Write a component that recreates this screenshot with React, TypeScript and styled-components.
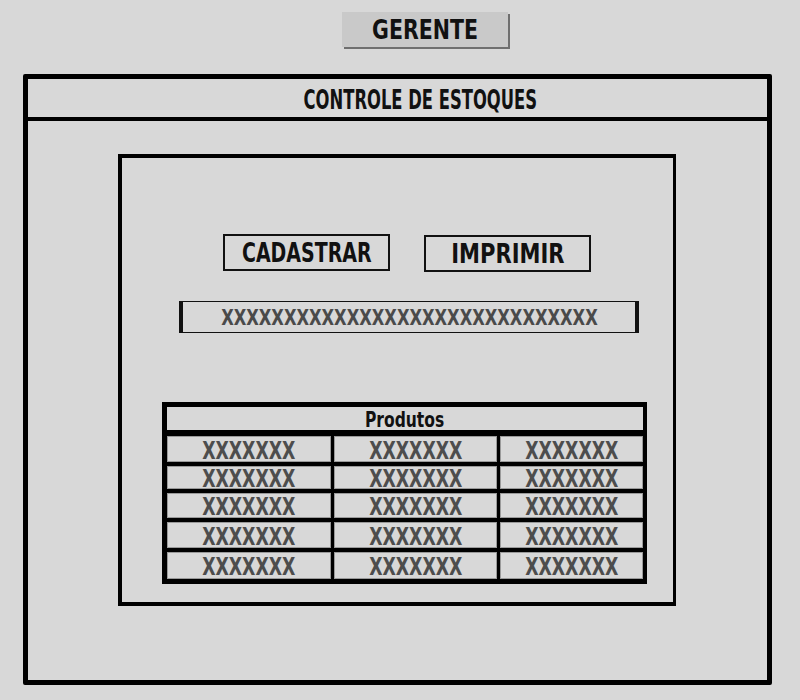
import styled, { createGlobalStyle } from 'styled-components';

const GlobalStyle = createGlobalStyle`
	html, body {
		margin: 0;
		padding: 0;
		background: #d8d8d8;
	}
	body {
		font-family: "DejaVu Sans", "Liberation Sans", sans-serif;
	}
`;

const Page = styled.div`
	width: 800px;
	height: 700px;
	padding-top: 12px;
	box-sizing: border-box;
	display: flex;
	flex-direction: column;
	background: #d8d8d8;
`;

// squeezed label, the mockup uses a narrow bold face
const Squeeze = styled.span<{ $scale: number }>`
	display: inline-block;
	white-space: nowrap;
	transform: scaleX(${(p) => p.$scale});
	transform-origin: center;
`;

const RoleTab = styled.div`
	margin-left: 342px;
	width: 166px;
	height: 35px;
	display: flex;
	align-items: center;
	justify-content: center;
	background: #c9c9c9;
	box-shadow: 2px 2px 0 #6f6f6f;
	font-size: 26px;
	font-weight: bold;
	color: #111;
`;

const Frame = styled.div`
	margin-top: 27px;
	margin-left: 23px;
	width: 749px;
	height: 611px;
	box-sizing: border-box;
	border: 5px solid #000;
	border-radius: 2px;
	display: flex;
	flex-direction: column;
`;

const Header = styled.div`
	height: 42px;
	box-sizing: border-box;
	border-bottom: 4px solid #000;
	border-right: 2px solid #000;
	margin-right: -2px;
	padding: 4px 0 0 46px;
	display: flex;
	align-items: center;
	justify-content: center;
	font-size: 26px;
	font-weight: bold;
	color: #111;
`;

const Body = styled.div`
	flex: 1;
	padding: 33px 0 0 90px;
`;

const Panel = styled.div`
	width: 558px;
	height: 452px;
	box-sizing: border-box;
	border: 4px solid #000;
	border-right-width: 3px;
	display: flex;
	flex-direction: column;
	padding-top: 76px;
`;

const ButtonRow = styled.div`
	display: flex;
	gap: 34px;
	padding-left: 101px;
`;

const ActionButton = styled.div<{ $offset?: number }>`
	width: 167px;
	height: 37px;
	box-sizing: border-box;
	border: 2px solid #111;
	margin-top: ${(p) => p.$offset ?? 0}px;
	display: flex;
	align-items: center;
	justify-content: center;
	font-size: 26px;
	font-weight: bold;
	color: #111;
`;

const SearchBar = styled.div`
	margin-top: 29px;
	margin-left: 57px;
	width: 460px;
	height: 32px;
	box-sizing: border-box;
	border: 1px solid #111;
	border-left-width: 4px;
	border-right-width: 4px;
	display: flex;
	align-items: center;
	justify-content: center;
	font-size: 22px;
	font-weight: bold;
	color: #4a4a4a;
`;

const Table = styled.div`
	margin-top: 69px;
	margin-left: 40px;
	width: 485px;
	box-sizing: border-box;
	background: #000;
	padding: 5px 4px 5px 5px;
	display: grid;
	grid-template-columns: 164px 163px 1fr;
	column-gap: 3px;
	row-gap: 4px;
`;

const TableTitle = styled.div`
	grid-column: 1 / -1;
	height: 21px;
	margin-bottom: 2px;
	padding-top: 2px;
	background: #d8d8d8;
	display: flex;
	align-items: center;
	justify-content: center;
	font-size: 21px;
	font-weight: bold;
	color: #111;
`;

const Cell = styled.div<{ $h: number }>`
	height: ${(p) => p.$h}px;
	box-sizing: border-box;
	padding-top: 3px;
	background: #d8d8d8;
	border: 1px solid #9a9a9a;
	display: flex;
	align-items: center;
	justify-content: center;
	font-size: 24px;
	font-weight: bold;
	color: #4d4d4d;
`;

const rowHeights = [26, 23, 25, 26, 27];

const App = () => {
	return (
		<Page>
			<GlobalStyle />
			<RoleTab><Squeeze $scale={0.79}>GERENTE</Squeeze></RoleTab>
			<Frame>
				<Header><Squeeze $scale={0.63}>CONTROLE DE ESTOQUES</Squeeze></Header>
				<Body>
					<Panel>
						<ButtonRow>
							<ActionButton><Squeeze $scale={0.73}>CADASTRAR</Squeeze></ActionButton>
							<ActionButton $offset={1}><Squeeze $scale={0.81}>IMPRIMIR</Squeeze></ActionButton>
						</ButtonRow>
						<SearchBar>
							<Squeeze $scale={0.74}>XXXXXXXXXXXXXXXXXXXXXXXXXXXXXX</Squeeze>
						</SearchBar>
						<Table>
							<TableTitle><Squeeze $scale={0.74}>Produtos</Squeeze></TableTitle>
							{rowHeights.map((h, i) =>
								[0, 1, 2].map((c) => (
									<Cell key={`${i}-${c}`} $h={h}>
										<Squeeze $scale={0.72}>XXXXXXX</Squeeze>
									</Cell>
								))
							)}
						</Table>
					</Panel>
				</Body>
			</Frame>
		</Page>
	);
};

export default App;
